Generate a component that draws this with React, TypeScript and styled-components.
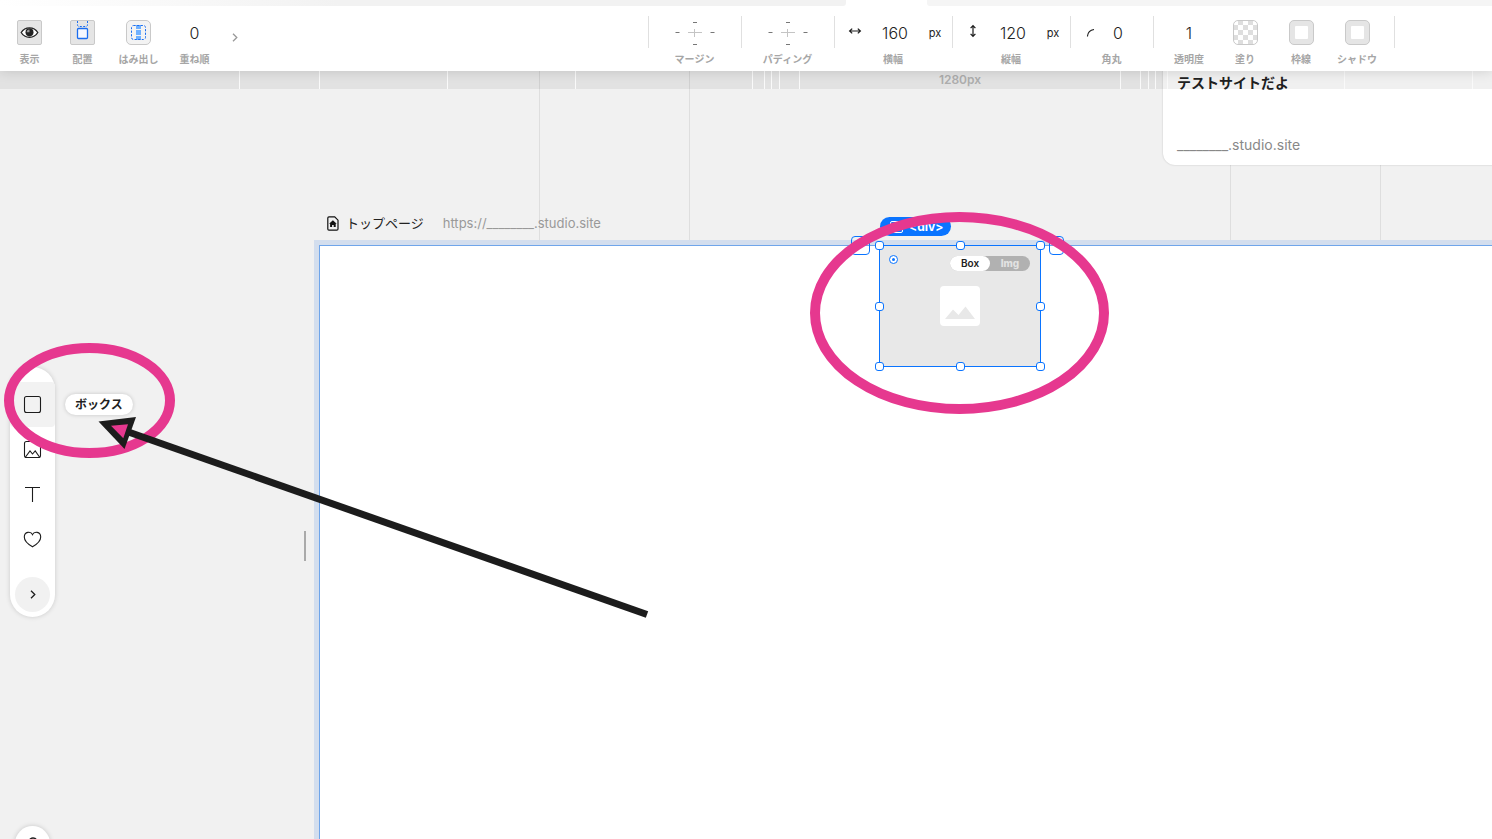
import React from "react";
import styled, { createGlobalStyle } from "styled-components";

const blue = "#0a74ff";
const pink = "#e6388f";
const ink = "#1c1c1c";
const sans = `Inter, "Noto Sans CJK JP", sans-serif`;

const GlobalStyle = createGlobalStyle`
  * { box-sizing: border-box; }
  body { margin: 0; background: #f1f1f1; color: #222; font-family: ${sans}; font-size: 13px; }
  button, input { font-family: inherit; color: inherit; margin: 0; padding: 0; border: 0; background: none; }
  button { cursor: pointer; }
  svg { display: block; }
`;

const Editor = styled.div`
  position: relative;
  display: flex;
  flex-direction: column;
  height: 100vh;
  overflow: hidden;
`;

/* Top bar */
const Header = styled.header`
  position: relative;
  z-index: 2;
  background: #fff;
  box-shadow: 0 0 12px rgba(0, 0, 0, 0.15);
`;
const TabStrip = styled.div`
  display: flex;
  height: 6px;
`;
const TabFiller = styled.div<{ $grow: number; $side: "left" | "right" }>`
  flex: ${(p) => p.$grow} 1 0;
  background: ${(p) => (p.$side === "left" ? "linear-gradient(90deg, #fff, #f2f2f2 40%)" : "#f5f5f5")};
  border-radius: ${(p) => (p.$side === "left" ? "0 0 3px 0" : "0 0 0 3px")};
`;
const CurrentTab = styled.div`
  width: 81px;
`;
const Toolbar = styled.div`
  display: flex;
  justify-content: space-between;
  height: 65px;
  padding: 10px 97px 0 3px;
`;
const ToolGroup = styled.div`
  display: flex;
`;
const Cell = styled.div<{ $width: number; $divided?: boolean }>`
  width: ${(p) => p.$width}px;
  display: flex;
  flex-direction: column;
  align-items: center;
  ${(p) =>
    p.$divided &&
    "background: linear-gradient(#e0e0e0, #e0e0e0) left top / 1px 32px no-repeat;"}
`;
const CellBody = styled.div`
  display: flex;
  align-items: center;
  justify-content: center;
  height: 33px;
  width: 100%;
`;
const CellLabel = styled.label`
  font-size: 10px;
  line-height: 20px;
  font-weight: 700;
  color: #a6a6a6;
  white-space: nowrap;
`;
const StyleGroup = styled.div`
  display: flex;
  padding: 0 10px 0 8px;
  background:
    linear-gradient(#e0e0e0, #e0e0e0) left top / 1px 32px no-repeat,
    linear-gradient(#e0e0e0, #e0e0e0) right top / 1px 32px no-repeat;
`;
const IconButton = styled.button<{ $radius?: number; $fill?: string }>`
  display: flex;
  align-items: center;
  justify-content: center;
  width: 25px;
  height: 25px;
  overflow: hidden;
  border: 1px solid #c9c9c9;
  border-radius: ${(p) => p.$radius ?? 2}px;
  background: ${(p) => p.$fill ?? "#e5e5e5"};
`;
const PlainButton = styled.button`
  display: flex;
  align-items: center;
  justify-content: center;
`;
const NextButton = styled(PlainButton)`
  width: 20px;
  height: 20px;
  margin: 11px 0 0 4px;
`;
const NumberInput = styled.input<{ $width: number }>`
  width: ${(p) => p.$width}px;
  height: 24px;
  font-size: 16px;
  font-weight: 300;
  text-align: center;
  outline: none;
`;
const ValueBody = styled(CellBody)`
  justify-content: flex-start;
  padding-left: 14px;
`;
const IconSlot = styled.span`
  width: 14px;
  height: 18px;
  flex: none;
`;
const Unit = styled.span`
  width: 14px;
  font-size: 11px;
  line-height: 16px;
  font-weight: 400;
  text-align: center;
`;

/* Canvas */
const Stage = styled.main`
  position: relative;
  flex: 1;
  min-height: 0;
  display: flex;
  flex-direction: column;
  padding: 142px 0 0 319px;
  overflow: hidden;
`;
const Layer = styled.div<{ $height: number; $tint?: string }>`
  position: absolute;
  top: 0;
  left: 0;
  display: flex;
  height: ${(p) => p.$height}px;
  width: 100%;
  overflow: hidden;
  background: ${(p) => p.$tint ?? "none"};
`;
const Segment = styled.div<{ $width: number; $line: string }>`
  flex: none;
  width: ${(p) => p.$width}px;
  border-right: 1px solid ${(p) => p.$line};
  color: #adadad;
  font-size: 12px;
  line-height: 18px;
  font-weight: 600;
  text-align: center;
`;
const PageCaption = styled.div`
  position: relative;
  display: flex;
  align-items: center;
  height: 20px;
  margin: 0 0 12px 8px;
  white-space: nowrap;
`;
const PageName = styled.span`
  margin: 0 19px 0 7px;
  line-height: 20px;
`;
const PageUrl = styled.span`
  color: #999;
  line-height: 20px;
`;
const Artboard = styled.section`
  position: relative;
  flex: 1;
  width: 1282px;
  background: #fff;
  border: 1px solid #6fa5ea;
  border-bottom: 0;
  box-shadow: 0 0 0 5px #d3deee;
`;
const SiteCard = styled.article`
  position: absolute;
  top: -20px;
  left: 1163px;
  width: 400px;
  height: 114px;
  padding: 20px 14px;
  background: #fff;
  border-radius: 12px;
  box-shadow: 0 0 2px rgba(0, 0, 0, 0.2);
`;
const SiteTitle = styled.h2`
  margin: 0;
  font-size: 14px;
  line-height: 24px;
  font-weight: 700;
`;
const SiteUrl = styled.p`
  margin: 40px 0 0;
  font-size: 14px;
  line-height: 20px;
  color: #888;
`;

/* Selected element */
const Selection = styled.div`
  position: absolute;
  top: -1px;
  left: calc(50% - 81px);
  width: 162px;
  height: 122px;
  display: flex;
  align-items: center;
  justify-content: center;
  background: #e8e8e8;
  border: 1px solid ${blue};
`;
const Handles = styled.div`
  position: absolute;
  inset: -5px;
  display: grid;
  grid-template-columns: repeat(3, 9px);
  grid-template-rows: repeat(3, 9px);
  justify-content: space-between;
  align-content: space-between;
`;
const Handle = styled.span<{ $hidden?: boolean }>`
  background: #fff;
  border: 1px solid ${blue};
  border-radius: 3px;
  visibility: ${(p) => (p.$hidden ? "hidden" : "visible")};
`;
const ElementTag = styled.div`
  position: absolute;
  top: -29px;
  left: 0;
  display: flex;
  align-items: center;
  gap: 6px;
  height: 19px;
  padding: 0 8px 0 10px;
  border-radius: 10px;
  background: ${blue};
  color: #fff;
  font-size: 12px;
  line-height: 19px;
  font-weight: 700;
`;
const TagBox = styled.span`
  width: 13px;
  height: 12px;
  border: 1px solid #fff;
  border-radius: 2px;
`;
const SideSlot = styled.span<{ $side: "left" | "right" }>`
  position: absolute;
  top: -10px;
  ${(p) => (p.$side === "left" ? "left: -29px; width: 19px;" : "right: -24px; width: 15px;")}
  height: 19px;
  border: 1px solid ${blue};
  border-radius: 4px;
`;
const Anchor = styled.span`
  position: absolute;
  top: 9px;
  left: 9px;
`;
const KindSwitch = styled.div`
  position: absolute;
  top: 10px;
  right: 10px;
  display: flex;
  width: 80px;
  height: 15px;
  border-radius: 8px;
  background: #b1b1b1;
`;
const Kind = styled.button<{ $on?: boolean }>`
  flex: 1;
  border-radius: 8px;
  font-size: 10px;
  line-height: 15px;
  font-weight: ${(p) => (p.$on ? 600 : 800)};
  background: ${(p) => (p.$on ? "#fff" : "transparent")};
  color: ${(p) => (p.$on ? "#222" : "#e2e2e2")};
`;

/* Floating palette */
const Palette = styled.nav`
  position: absolute;
  top: 296px;
  left: 10px;
  display: flex;
  flex-direction: column;
  align-items: center;
  width: 45px;
  padding: 15px 0 5px;
  border-radius: 23px;
  background: #fff;
  box-shadow: 0 0 5px rgba(0, 0, 0, 0.16);
`;
const PaletteButton = styled(PlainButton)<{ $active?: boolean }>`
  width: 45px;
  height: 45px;
  border-radius: 4px;
  background: ${(p) => (p.$active ? "#f2f2f2" : "transparent")};
`;
const MoreButton = styled(PlainButton)`
  width: 35px;
  height: 35px;
  margin-top: 15px;
  border-radius: 50%;
  background: #f1f1f1;
`;
const Tooltip = styled.div`
  position: absolute;
  top: 27px;
  left: 55px;
  padding: 0 10px;
  border-radius: 11px;
  background: #fff;
  box-shadow: 0 0 4px rgba(0, 0, 0, 0.18);
  font-size: 12px;
  line-height: 21px;
  font-weight: 700;
  white-space: nowrap;
`;
const ResizeGrip = styled.div`
  position: absolute;
  top: 460px;
  left: 304px;
  width: 2px;
  height: 30px;
  background: #aaa;
`;
const HelpButton = styled(PlainButton)`
  position: absolute;
  bottom: -22px;
  left: 15px;
  width: 35px;
  height: 35px;
  border-radius: 50%;
  background: #fff;
  box-shadow: 0 0 5px rgba(0, 0, 0, 0.18);
`;
const Markup = styled.svg`
  position: absolute;
  inset: 0;
  z-index: 3;
  width: 100%;
  height: 100%;
  pointer-events: none;
`;

const EyeIcon = () => (
  <svg width="19" height="15" viewBox="0 0 19 15" fill="none">
    <path d="M1.2 7.5C5 1.2 14 1.2 17.8 7.5C14 13.8 5 13.8 1.2 7.5Z" fill="#fff" stroke="#222" strokeWidth="1.3" />
    <circle cx="9.5" cy="7.3" r="4" fill="#222" />
    <path d="M9.5 7.3V4.5A2.8 2.8 0 0 0 6.7 7.3Z" fill="#999" />
  </svg>
);
const PlacementIcon = () => (
  <svg width="23" height="23" viewBox="0 0 23 23" fill="none" stroke="#1a6df0">
    <path d="M6.5 0V3.5Q6.5 5.5 8 5.5H15Q16.5 5.5 16.5 3.5V0" strokeDasharray="2 1.4" />
    <rect x="6.5" y="7.5" width="10" height="10" rx="1" fill="#f5f8ff" strokeWidth="1.3" />
  </svg>
);
const OverflowIcon = () => (
  <svg width="23" height="23" viewBox="0 0 23 23" fill="none">
    <rect x="9" y="4" width="5" height="4" fill="#6fb0ff" />
    <rect x="9" y="9" width="5" height="5" fill="#6fb0ff" />
    <rect x="9" y="15" width="5" height="4" fill="#6fb0ff" />
    <rect x="4.5" y="4.5" width="14" height="14" rx="2" stroke="#1a6df0" strokeDasharray="2.2 1.4" />
  </svg>
);
const Chevron = ({ color }: { color: string }) => (
  <svg width="6" height="9" viewBox="0 0 6 9" fill="none" stroke={color} strokeWidth="1.3">
    <path d="M1 0.7L4.8 4.5L1 8.3" />
  </svg>
);
const SpacingIcon = () => (
  <svg width="40" height="26" viewBox="0 0 40 26" fill="none" stroke="#777">
    <path d="M18 2.5H22M0.5 12.5H4.5M35.5 12.5H39.5M18 24.5H22" />
    <path d="M13 12.5H27M19.5 9V17" stroke="#c4c4c4" />
  </svg>
);
const WidthIcon = () => (
  <svg width="14" height="14" viewBox="0 0 14 14" fill="none" stroke={ink} strokeWidth="1.2">
    <path d="M2 7H12M4.2 4.6L1.6 7L4.2 9.4M9.8 4.6L12.4 7L9.8 9.4" />
  </svg>
);
const HeightIcon = () => (
  <svg width="14" height="14" viewBox="0 0 14 14" fill="none" stroke={ink} strokeWidth="1.2">
    <path d="M7 2V12M4.6 4.2L7 1.6L9.4 4.2M4.6 9.8L7 12.4L9.4 9.8" />
  </svg>
);
const CornerIcon = () => (
  <svg width="14" height="18" viewBox="0 0 14 18" fill="none" stroke={ink} strokeWidth="1.1">
    <path d="M3.5 12.5V12Q4 6.5 10 5.5" />
  </svg>
);
const CheckerIcon = () => (
  <svg width="23" height="23" viewBox="0 0 23 23" fill="#dedede">
    {[0, 1, 2, 3, 4].flatMap((row) =>
      [0, 1, 2, 3, 4]
        .filter((col) => (row + col) % 2 === 1)
        .map((col) => <rect key={`${row}-${col}`} x={col * 5 - 1} y={row * 5 - 1} width="5" height="5" />)
    )}
  </svg>
);
const FrameIcon = () => (
  <svg width="23" height="23" viewBox="0 0 23 23">
    <rect x="5" y="5" width="13" height="13" rx="1" fill="#fff" />
  </svg>
);
const HomePageIcon = () => (
  <svg width="12" height="15" viewBox="0 0 12 15" fill="none">
    <path d="M0.8 2Q0.8 0.8 2 0.8H7.7L11 4.2V13Q11 14.2 9.8 14.2H2Q0.8 14.2 0.8 13Z" stroke="#111" strokeWidth="1.2" />
    <path d="M5.9 4.2L9.7 7.8H8.7V11H6.7V9H5.1V11H3.1V7.8H2.1Z" fill="#111" />
  </svg>
);
const BoxIcon = () => (
  <svg width="19" height="19" viewBox="0 0 19 19" fill="none" stroke={ink} strokeWidth="1.1">
    <rect x="1.5" y="1.5" width="16" height="16" rx="2" />
  </svg>
);
const PictureIcon = () => (
  <svg width="19" height="19" viewBox="0 0 19 19" fill="none" stroke={ink} strokeWidth="1.1">
    <rect x="1.5" y="1.5" width="16" height="16" rx="2" />
    <path d="M2.5 17L7 11L9.5 14L12.2 11L16.5 17" />
  </svg>
);
const TextIcon = () => (
  <svg width="17" height="17" viewBox="0 0 17 17" fill="none" stroke={ink} strokeWidth="1.1">
    <path d="M1 1.5H16M8.5 1.5V16" />
  </svg>
);
const HeartIcon = () => (
  <svg width="19" height="17" viewBox="0 0 19 17" fill="none" stroke={ink} strokeWidth="1.1">
    <path d="M9.5 3.6C8 0.2 1.3 0.3 1.3 6C1.3 10 5.3 13.4 9.5 15.8C13.7 13.4 17.7 10 17.7 6C17.7 0.3 11 0.2 9.5 3.6Z" />
  </svg>
);
const HelpIcon = () => (
  <svg width="12" height="14" viewBox="0 0 12 14" fill="none" stroke={ink} strokeWidth="1.3">
    <path d="M2.5 4C2.5 0 9.5 0 9.5 4C9.5 6.5 6 6.5 6 9.5M6 11.5V13" />
  </svg>
);
const PlaceholderIcon = () => (
  <svg width="40" height="40" viewBox="0 0 40 40">
    <rect width="40" height="40" rx="4" fill="#fff" />
    <path d="M5 33L13 23.5L18.5 29L25.5 20.5L35 33Z" fill="#e8e8e8" />
  </svg>
);

const guides = [540, 150, 541, 150];
const rulerTicks = [240, 80, 128, 128, 177, 12, 7, 8, 20, 321, 20, 8, 7, 12, 177, 128];

const sizes = [
  { id: "width", label: "横幅", value: "160", Icon: WidthIcon },
  { id: "height", label: "縦幅", value: "120", Icon: HeightIcon },
];

export default function App() {
  return (
    <Editor>
      <GlobalStyle />
      <Header>
        <TabStrip>
          <TabFiller $grow={846} $side="left" />
          <CurrentTab />
          <TabFiller $grow={565} $side="right" />
        </TabStrip>
        <Toolbar>
          <ToolGroup>
            <Cell $width={53}>
              <CellBody><IconButton id="display"><EyeIcon /></IconButton></CellBody>
              <CellLabel htmlFor="display">表示</CellLabel>
            </Cell>
            <Cell $width={53}>
              <CellBody><IconButton id="placement"><PlacementIcon /></IconButton></CellBody>
              <CellLabel htmlFor="placement">配置</CellLabel>
            </Cell>
            <Cell $width={59}>
              <CellBody><IconButton id="overflow" $radius={5} $fill="#f3f3f3"><OverflowIcon /></IconButton></CellBody>
              <CellLabel htmlFor="overflow">はみ出し</CellLabel>
            </Cell>
            <Cell $width={53}>
              <CellBody><NumberInput id="order" $width={40} defaultValue="0" /></CellBody>
              <CellLabel htmlFor="order">重ね順</CellLabel>
            </Cell>
            <NextButton aria-label="次へ"><Chevron color="#999" /></NextButton>
          </ToolGroup>
          <ToolGroup>
            <Cell $width={93} $divided>
              <CellBody><PlainButton id="margin"><SpacingIcon /></PlainButton></CellBody>
              <CellLabel htmlFor="margin">マージン</CellLabel>
            </Cell>
            <Cell $width={93} $divided>
              <CellBody><PlainButton id="padding"><SpacingIcon /></PlainButton></CellBody>
              <CellLabel htmlFor="padding">パディング</CellLabel>
            </Cell>
            {sizes.map(({ id, label, value, Icon }) => (
              <Cell key={id} $width={118} $divided>
                <ValueBody>
                  <IconSlot><Icon /></IconSlot>
                  <NumberInput id={id} $width={66} defaultValue={value} />
                  <Unit>px</Unit>
                </ValueBody>
                <CellLabel htmlFor={id}>{label}</CellLabel>
              </Cell>
            ))}
            <Cell $width={83} $divided>
              <ValueBody>
                <IconSlot><CornerIcon /></IconSlot>
                <NumberInput id="corner" $width={40} defaultValue="0" />
              </ValueBody>
              <CellLabel htmlFor="corner">角丸</CellLabel>
            </Cell>
            <StyleGroup>
              <Cell $width={56}>
                <CellBody><NumberInput id="opacity" $width={40} defaultValue="1" /></CellBody>
                <CellLabel htmlFor="opacity">透明度</CellLabel>
              </Cell>
              <Cell $width={56}>
                <CellBody><IconButton id="fill" $radius={5} $fill="#fff"><CheckerIcon /></IconButton></CellBody>
                <CellLabel htmlFor="fill">塗り</CellLabel>
              </Cell>
              <Cell $width={56}>
                <CellBody><IconButton id="border" $radius={5}><FrameIcon /></IconButton></CellBody>
                <CellLabel htmlFor="border">枠線</CellLabel>
              </Cell>
              <Cell $width={56}>
                <CellBody><IconButton id="shadow" $radius={5}><FrameIcon /></IconButton></CellBody>
                <CellLabel htmlFor="shadow">シャドウ</CellLabel>
              </Cell>
            </StyleGroup>
          </ToolGroup>
        </Toolbar>
      </Header>

      <Stage>
        <Layer $height={174}>
          {guides.map((w, i) => <Segment key={i} $width={w} $line="#dedede" />)}
        </Layer>
        <PageCaption>
          <HomePageIcon />
          <PageName>トップページ</PageName>
          <PageUrl>https://________.studio.site</PageUrl>
        </PageCaption>
        <Artboard>
          <Selection>
            <SideSlot $side="left" />
            <SideSlot $side="right" />
            <ElementTag><TagBox />&lt;div&gt;</ElementTag>
            <Anchor>
              <svg width="9" height="9" viewBox="0 0 9 9">
                <circle cx="4.5" cy="4.5" r="4" fill="#fff" stroke={blue} />
                <circle cx="4.5" cy="4.5" r="1.5" fill={blue} />
              </svg>
            </Anchor>
            <KindSwitch>
              <Kind $on aria-pressed="true">Box</Kind>
              <Kind aria-pressed="false">Img</Kind>
            </KindSwitch>
            <PlaceholderIcon />
            <Handles>
              {Array.from({ length: 9 }, (_, i) => <Handle key={i} $hidden={i === 4} />)}
            </Handles>
          </Selection>
        </Artboard>
        <SiteCard>
          <SiteTitle>テストサイトだよ</SiteTitle>
          <SiteUrl>________.studio.site</SiteUrl>
        </SiteCard>
        <Layer $height={18} $tint="rgba(0, 0, 0, 0.06)">
          {rulerTicks.map((w, i) => (
            <Segment key={i} $width={w} $line="#fafafa">{i === 9 && "1280px"}</Segment>
          ))}
        </Layer>

        <ResizeGrip />
        <Palette>
          <PaletteButton $active aria-label="ボックス"><BoxIcon /></PaletteButton>
          <PaletteButton aria-label="画像"><PictureIcon /></PaletteButton>
          <PaletteButton aria-label="テキスト"><TextIcon /></PaletteButton>
          <PaletteButton aria-label="アイコン"><HeartIcon /></PaletteButton>
          <MoreButton aria-label="もっと見る"><Chevron color={ink} /></MoreButton>
          <Tooltip role="tooltip">ボックス</Tooltip>
        </Palette>
        <HelpButton aria-label="ヘルプ"><HelpIcon /></HelpButton>
      </Stage>

      <Markup fill="none">
        <ellipse cx="89.5" cy="400.5" rx="80.5" ry="52.5" stroke={pink} strokeWidth="10" />
        <ellipse cx="959.5" cy="313" rx="144.5" ry="96" stroke={pink} strokeWidth="10" />
        <path d="M647 614.5L127 431.5" stroke={ink} strokeWidth="7" />
        <path d="M98.5 421.5L136 417L124.5 449Z" fill={ink} />
        <path d="M111 425.7L128 424.3L123.3 438.3Z" fill={pink} />
      </Markup>
    </Editor>
  );
}
